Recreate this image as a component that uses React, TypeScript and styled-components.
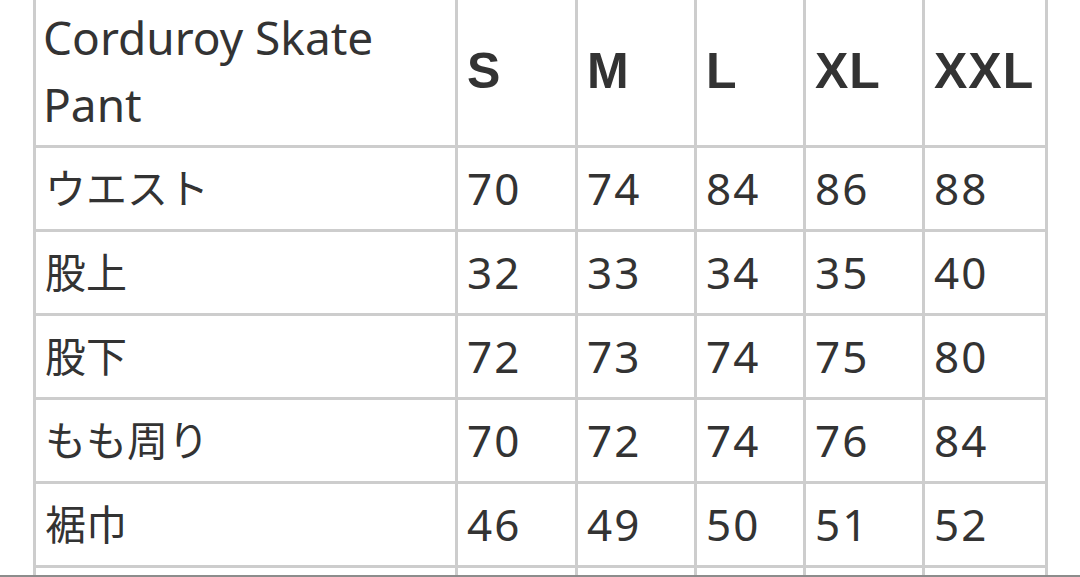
import React from "react";
import styled, { createGlobalStyle } from "styled-components";

const sizes = ["S", "M", "L", "XL", "XXL"];

const rows: { label: string; values: number[] }[] = [
  { label: "ウエスト", values: [70, 74, 84, 86, 88] },
  { label: "股上", values: [32, 33, 34, 35, 40] },
  { label: "股下", values: [72, 73, 74, 75, 80] },
  { label: "もも周り", values: [70, 72, 74, 76, 84] },
  { label: "裾巾", values: [46, 49, 50, 51, 52] },
  { label: "", values: [] },
];

// widths of each column incl. its right border
const colWidths = [422, 120, 119, 109, 119, 123];

const GlobalStyle = createGlobalStyle`
  html, body {
    margin: 0;
    padding: 0;
    background: #fff;
  }
`;

const Screen = styled.div`
  width: 1080px;
  height: 577px;
  display: flex;
  flex-direction: column;
  overflow: hidden;
  background: #fff;
`;

const Viewport = styled.div`
  flex: 1;
  overflow: hidden;
  padding-left: 33px;
`;

const BottomEdge = styled.div`
  height: 2px;
  background: #8c8c8c;
`;

const SizeTable = styled.table`
  margin-top: -6px;
  table-layout: fixed;
  border-collapse: separate;
  border-spacing: 0;
  width: ${colWidths.reduce((a, b) => a + b, 0) + 3}px;
  border-left: 3px solid #cdcdcd;
  border-top: 3px solid #cdcdcd;
  color: #333;
  font-family: "Noto Sans", "Noto Sans CJK JP", sans-serif;
  font-size: 41px;
  line-height: 67px;
`;

const Col = styled.col<{ $w: number }>`
  width: ${(p) => p.$w}px;
`;

const Cell = styled.td`
  box-sizing: border-box;
  padding: 7px 9px;
  border-right: 3px solid #cdcdcd;
  border-bottom: 3px solid #cdcdcd;
  vertical-align: middle;
  text-align: left;
  white-space: nowrap;
  font-weight: 400;
`;

const TitleCell = styled(Cell).attrs({ as: "th" })`
  padding-left: 7px;
  white-space: normal;
  font-weight: 400;
  font-size: 46px;
`;

const SizeHead = styled(Cell).attrs({ as: "th" })`
  font-family: "Liberation Sans", Arial, sans-serif;
  font-weight: 700;
  font-size: 50px;
  letter-spacing: 1px;
`;

const NumCell = styled(Cell)`
  font-size: 44px;
  letter-spacing: 2px;
`;

export default function App() {
  return (
    <Screen>
      <GlobalStyle />
      <Viewport>
        <SizeTable>
          <colgroup>
            {colWidths.map((w, i) => (
              <Col key={i} $w={w} />
            ))}
          </colgroup>
          <thead>
            <tr>
              <TitleCell>Corduroy Skate Pant</TitleCell>
              {sizes.map((s) => (
                <SizeHead key={s}>{s}</SizeHead>
              ))}
            </tr>
          </thead>
          <tbody>
            {rows.map((r, i) => (
              <tr key={i}>
                <Cell>{r.label || "\u00a0"}</Cell>
                {sizes.map((s, j) => (
                  <NumCell key={s}>{r.values[j] ?? ""}</NumCell>
                ))}
              </tr>
            ))}
          </tbody>
        </SizeTable>
      </Viewport>
      <BottomEdge />
    </Screen>
  );
}
